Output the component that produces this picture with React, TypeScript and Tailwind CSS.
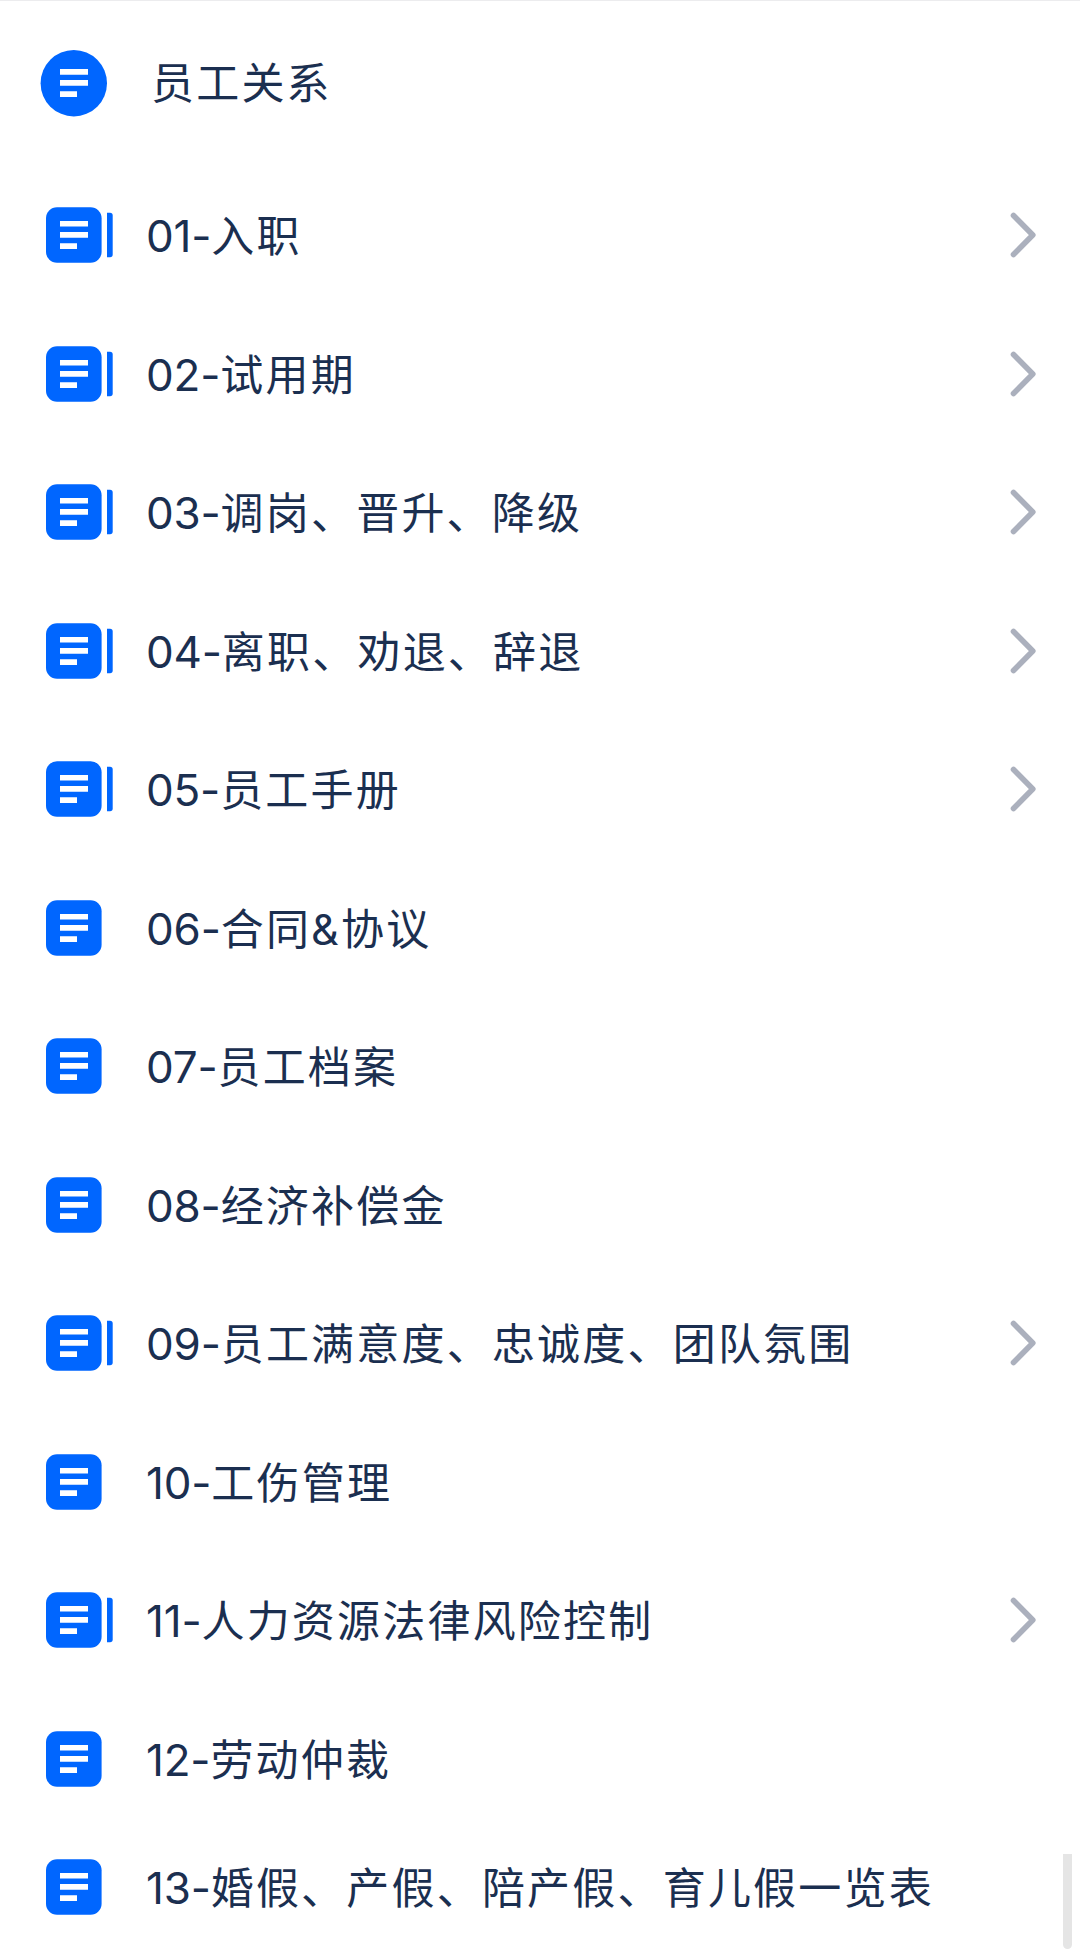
type Doc = {
  no: string
  title: string
  nested?: boolean
}

const docs: Doc[] = [
  { no: "01-", title: "入职", nested: true },
  { no: "02-", title: "试用期", nested: true },
  { no: "03-", title: "调岗、晋升、降级", nested: true },
  { no: "04-", title: "离职、劝退、辞退", nested: true },
  { no: "05-", title: "员工手册", nested: true },
  { no: "06-", title: "合同&协议" },
  { no: "07-", title: "员工档案" },
  { no: "08-", title: "经济补偿金" },
  { no: "09-", title: "员工满意度、忠诚度、团队氛围", nested: true },
  { no: "10-", title: "工伤管理" },
  { no: "11-", title: "人力资源法律风险控制", nested: true },
  { no: "12-", title: "劳动仲裁" },
  { no: "13-", title: "婚假、产假、陪产假、育儿假一览表" },
]

function RootIcon() {
  return (
    <svg className="size-[67px] shrink-0" viewBox="0 0 67 67">
      <circle cx="33.8" cy="33.2" r="33.2" fill="#0066ff" />
      <path d="M20 19h28v5.7H20zM20 30.1h28v5.7H20zM20 41.3h17V47H20z" fill="#fff" />
    </svg>
  )
}

function DocIcon({ nested }: { nested?: boolean }) {
  return (
    <svg className="h-14 w-[67px] shrink-0" viewBox="0 0 67 56">
      <rect x="0" y="0.2" width="55.6" height="55.6" rx="11" fill="#0066ff" />
      <path d="M14 13.9h28v5.7H14zM14 25h28v5.7H14zM14 36.2h17v5.7H14z" fill="#fff" />
      {nested && <path d="M61 5.8h3a2.7 2.7 0 0 1 2.7 2.7v39a2.7 2.7 0 0 1-2.7 2.7h-3z" fill="#0066ff" />}
    </svg>
  )
}

function Chevron() {
  return (
    <svg className="h-[46px] w-7 shrink-0" viewBox="0 0 28 46" fill="none">
      <path d="M3.5 3.5 22.8 23 3.5 42.5" stroke="#abb0bd" strokeWidth="5.6" strokeLinecap="round" strokeLinejoin="round" />
    </svg>
  )
}

export default function App() {
  return (
    <div className="relative h-[1953px] w-[1080px] overflow-hidden border-t border-[#ececee] bg-white font-[Inter,'Noto_Sans_CJK_SC',sans-serif] text-[43px] leading-none tracking-[2.2px] text-[#1b2f50]">
      {/* Header */}
      <header className="flex h-[165px] items-center pl-10">
        <RootIcon />
        <h1 className="pl-11">员工关系</h1>
      </header>

      {/* Document list */}
      <ul>
        {docs.map((doc) => (
          <li
            key={doc.no}
            className="flex h-[138.5px] items-center pl-[46px] pr-[42px] last:h-[118px]"
          >
            <DocIcon nested={doc.nested} />
            <span className="flex-1 whitespace-nowrap pl-[33px] pt-0.5">
              <span className="text-[44px] tracking-[-0.2px]">{doc.no}</span>
              {doc.title}
            </span>
            {doc.nested && <Chevron />}
          </li>
        ))}
      </ul>

      {/* Scroll thumb */}
      <div className="absolute right-2 top-[1853px] h-[95px] w-[9px] rounded-b-full bg-[#e5e5e5]" />
    </div>
  )
}
